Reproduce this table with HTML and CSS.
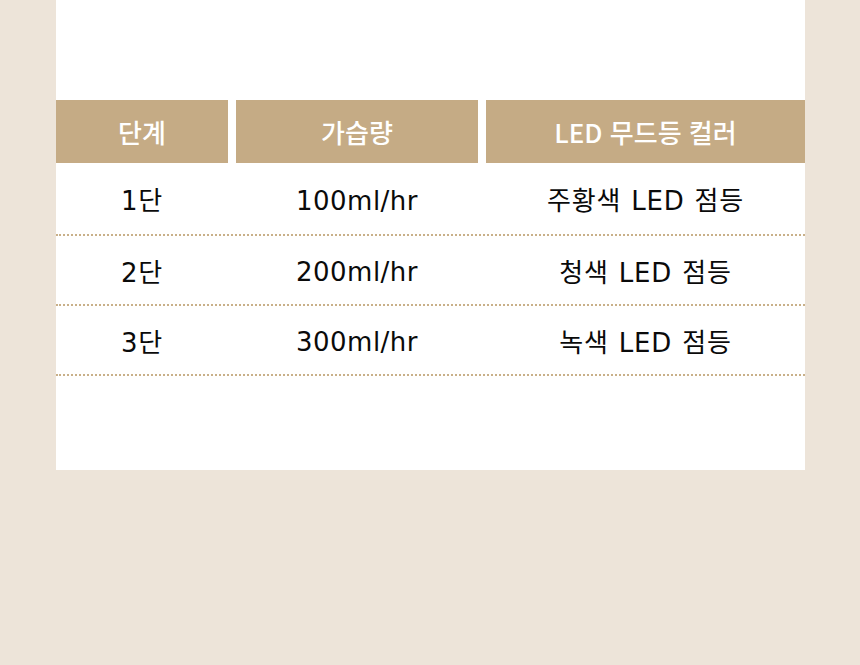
FILE: index.html
```html
<!DOCTYPE html>
<html lang="ko">
<head>
<meta charset="utf-8">
<link rel="stylesheet" href="styles.css">
</head>
<body>
<div class="panel">
  <div class="head">
    <div class="hcell">단계</div>
    <div class="hcell">가습량</div>
    <div class="hcell">LED 무드등 컬러</div>
  </div>
  <div class="row first">
    <div class="cell">1단</div>
    <div class="cell num">100ml/hr</div>
    <div class="cell">주황색 LED 점등</div>
  </div>
  <div class="row">
    <div class="cell">2단</div>
    <div class="cell num">200ml/hr</div>
    <div class="cell">청색 LED 점등</div>
  </div>
  <div class="row">
    <div class="cell">3단</div>
    <div class="cell num">300ml/hr</div>
    <div class="cell">녹색 LED 점등</div>
  </div>
</div>
</body>
</html>
```
FILE: styles.css
```css
html, body {
  margin: 0;
  padding: 0;
  background: #ede4d9;
}
body {
  width: 860px;
  height: 665px;
  overflow: hidden;
}
.panel {
  margin-left: 56px;
  width: 749px;
  height: 470px;
  background: #ffffff;
  padding-top: 100px;
  box-sizing: border-box;
}
.head, .row {
  display: grid;
  grid-template-columns: 172px 242px 319px;
  column-gap: 8px;
}
.hcell {
  height: 63px;
  background: #c5ab85;
  color: #ffffff;
  display: flex;
  align-items: center;
  justify-content: center;
  font-family: "Noto Sans CJK KR", "Noto Sans", sans-serif;
  font-weight: 500;
  font-size: 26px;
}
.row {
  height: 68px;
  border-bottom: 2px dotted #c9b089;
}
.row.first {
  height: 71px;
}
.cell {
  display: flex;
  align-items: center;
  justify-content: center;
  font-family: "DejaVu Sans", "Noto Sans CJK KR", sans-serif;
  font-weight: 400;
  font-size: 26px;
  letter-spacing: 0.8px;
  word-spacing: 1px;
  color: #0a0a0a;
}
.cell.num {
  padding-top: 4px;
  letter-spacing: 0.5px;
}
```
